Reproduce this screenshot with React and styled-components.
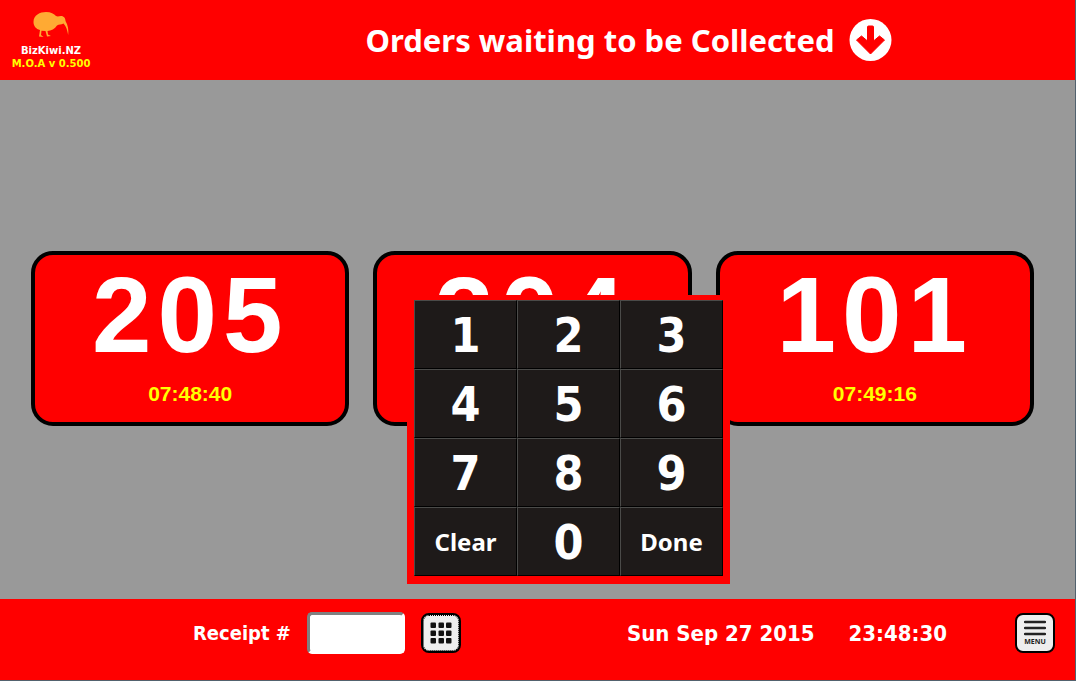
import React from "react";
import styled, { createGlobalStyle } from "styled-components";

const RED = "#ff0000";
const UI_FONT = '"DejaVu Sans Condensed", "DejaVu Sans", sans-serif';
const TEXT_FONT = '"Noto Sans", "DejaVu Sans", sans-serif';

const GlobalStyle = createGlobalStyle`
  *, *::before, *::after { box-sizing: border-box; }
  body { margin: 0; font-family: ${UI_FONT}; font-weight: bold; color: #fff; }
`;

const Page = styled.div`
  display: flex;
  flex-direction: column;
  min-height: 100vh;
  background: #999;
  border-right: 1px solid #52626e;
  border-bottom: 1px solid #52626e;
`;

const Header = styled.header`
  display: flex;
  min-height: 80px;
  background: ${RED};
`;

const Brand = styled.div`
  display: flex;
  flex-direction: column;
  align-items: center;
  flex: none;
  width: 102px;
  padding-top: 11px;
  margin-right: 80px;
  font-family: "DejaVu Sans", sans-serif;
  font-size: 10px;
  line-height: 13px;
`;

const BrandName = styled.span`
  margin-top: 6px;
`;

const Version = styled.span`
  color: #ff0;
`;

const TitleBar = styled.div`
  display: flex;
  flex: 1;
  align-items: center;
  justify-content: center;
  gap: 14px;
`;

const Title = styled.h1`
  margin: 0;
  font-family: ${TEXT_FONT};
  font-size: 31px;
  line-height: 40px;
`;

const ArrowButton = styled.button`
  display: flex;
  padding: 0;
  border: 0;
  background: none;
`;

const Board = styled.main`
  position: relative;
  display: flex;
  flex: 1;
  flex-direction: column;
  justify-content: center;
  padding: 0 41px 2px 31px;
`;

const Orders = styled.ul`
  display: grid;
  grid-template-columns: repeat(3, 1fr);
  gap: 24px;
  margin: 0;
  padding: 0;
  list-style: none;
`;

const OrderCard = styled.li`
  display: flex;
  flex-direction: column;
  align-items: center;
  gap: 6px;
  padding: 0 0 16px;
  border: 4px solid #000;
  border-radius: 22px;
  background: ${RED};
  font-family: "Liberation Sans", sans-serif;
`;

const OrderNumber = styled.span`
  font-size: 107px;
  line-height: 121px;
  letter-spacing: 6px;
`;

const OrderTime = styled.time`
  color: #ff0;
  font-size: 21px;
  line-height: 24px;
`;

const Keypad = styled.div`
  position: absolute;
  bottom: 15px;
  left: 407px;
  display: grid;
  grid-template-columns: repeat(3, 103px);
  grid-auto-rows: 69px;
  padding: 5px 7px 8px;
  background: ${RED};
`;

const Key = styled.button`
  padding: 0;
  border: 1px solid;
  border-color: #4b4b49 #000 #000 #4b4b49;
  background: #1e1a19;
  color: #fff;
  font-family: ${(p) => (p.$word ? TEXT_FONT : UI_FONT)};
  font-weight: bold;
  font-size: ${(p) => (p.$word ? 24 : 48)}px;
`;

const Footer = styled.footer`
  display: flex;
  align-items: flex-start;
  min-height: 81px;
  padding: 13px 20px 13px 193px;
  background: ${RED};
`;

const ReceiptForm = styled.form`
  display: flex;
  align-items: center;
  gap: 16px;
`;

const ReceiptLabel = styled.label`
  font-size: 20px;
  line-height: 24px;
`;

const ReceiptInput = styled.input`
  width: 98px;
  height: 42px;
  padding: 4px 8px;
  border: 3px solid;
  border-color: #808080 #fff #fff #808080;
  border-radius: 5px;
  background: #fff;
  font: inherit;
  font-size: 20px;
`;

const IconButton = styled.button`
  display: flex;
  align-items: center;
  justify-content: center;
  width: 40px;
  height: 40px;
  padding: 0;
  border: 2px solid #000;
  border-radius: 8px;
  background: #eee;
  ${(p) => p.$focused && "outline: 1px dotted #000; outline-offset: -3px;"}
`;

const MenuButton = styled(IconButton)`
  flex-direction: column;
  gap: 1px;
  margin-top: 1px;
  color: #222;
  font-family: "Open Sans", sans-serif;
  font-size: 7px;
  font-weight: bold;
  line-height: 8px;
`;

const Clock = styled.div`
  display: flex;
  gap: 34px;
  margin-left: auto;
  margin-right: 68px;
  font-size: 22px;
  line-height: 44px;
`;

const KiwiIcon = () => (
  <svg width="36" height="27" viewBox="0 0 36 27" fill="#ffaa33" aria-hidden="true">
    <path d="M.5 11C.5 4 7 1 13 1c5 0 8 2 10 4 2 1 3 0 5 0 3 0 4.500 2.500 4.500 5 2.500 4 3.300 9 2.700 14-1-5-2-9-4.700-11.500-2.500 1.500-4.500.5-6.500 2C22 18 18 19.500 14.500 20l.5 3.500 3 1.500-4 .5-1.500-5.500-4-.3-.5 4.300L10.500 26l-4.500-.5 1-6.500C3 18 .5 15 .5 11Z" />
  </svg>
);

const ArrowDownIcon = () => (
  <svg width="43" height="44" viewBox="0 0 43 44" aria-hidden="true">
    <ellipse cx="21.5" cy="22" rx="21" ry="21" fill="#fff" />
    <path d="M18.500 9q0-1 1-1h4q1 0 1 1v14l6-5 5 4-14 14-14-14 5-4 6 5Z" fill={RED} stroke={RED} strokeLinejoin="round" />
  </svg>
);

const GridIcon = () => (
  <svg width="22" height="22" viewBox="0 0 22 22" fill="#111" aria-hidden="true">
    {[0.5, 8.5, 16].map((y) =>
      [0.5, 8.5, 16].map((x) => <rect key={`${x}-${y}`} x={x} y={y} width="5.5" height="5.5" rx="1" />)
    )}
  </svg>
);

const MenuIcon = () => (
  <svg width="22" height="17" viewBox="0 0 22 17" stroke="#222" strokeWidth="2.4" strokeLinecap="round" aria-hidden="true">
    <path d="M1 2h20M1 8h20M1 14h20" />
  </svg>
);

const orders = [
  { number: "205", time: "07:48:40" },
  { number: "204" },
  { number: "101", time: "07:49:16" },
];

const keys = ["1", "2", "3", "4", "5", "6", "7", "8", "9", "Clear", "0", "Done"];

export default function App() {
  return (
    <>
      <GlobalStyle />
      <Page>
        <Header>
          <Brand>
            <KiwiIcon />
            <BrandName>BizKiwi.NZ</BrandName>
            <Version>M.O.A v 0.500</Version>
          </Brand>
          <TitleBar>
            <Title>Orders waiting to be Collected</Title>
            <ArrowButton type="button" aria-label="Show orders">
              <ArrowDownIcon />
            </ArrowButton>
          </TitleBar>
        </Header>
        <Board>
          <Orders>
            {orders.map((order) => (
              <OrderCard key={order.number}>
                <OrderNumber>{order.number}</OrderNumber>
                {order.time && <OrderTime>{order.time}</OrderTime>}
              </OrderCard>
            ))}
          </Orders>
          <Keypad role="group" aria-label="Keypad">
            {keys.map((key) => (
              <Key key={key} type="button" $word={key.length > 1}>
                {key}
              </Key>
            ))}
          </Keypad>
        </Board>
        <Footer>
          <ReceiptForm>
            <ReceiptLabel htmlFor="receipt">Receipt #</ReceiptLabel>
            <ReceiptInput id="receipt" type="text" />
            <IconButton type="button" aria-label="Toggle keypad" $focused>
              <GridIcon />
            </IconButton>
          </ReceiptForm>
          <Clock>
            <time>Sun Sep 27 2015</time>
            <time>23:48:30</time>
          </Clock>
          <MenuButton type="button">
            <MenuIcon />
            MENU
          </MenuButton>
        </Footer>
      </Page>
    </>
  );
}
